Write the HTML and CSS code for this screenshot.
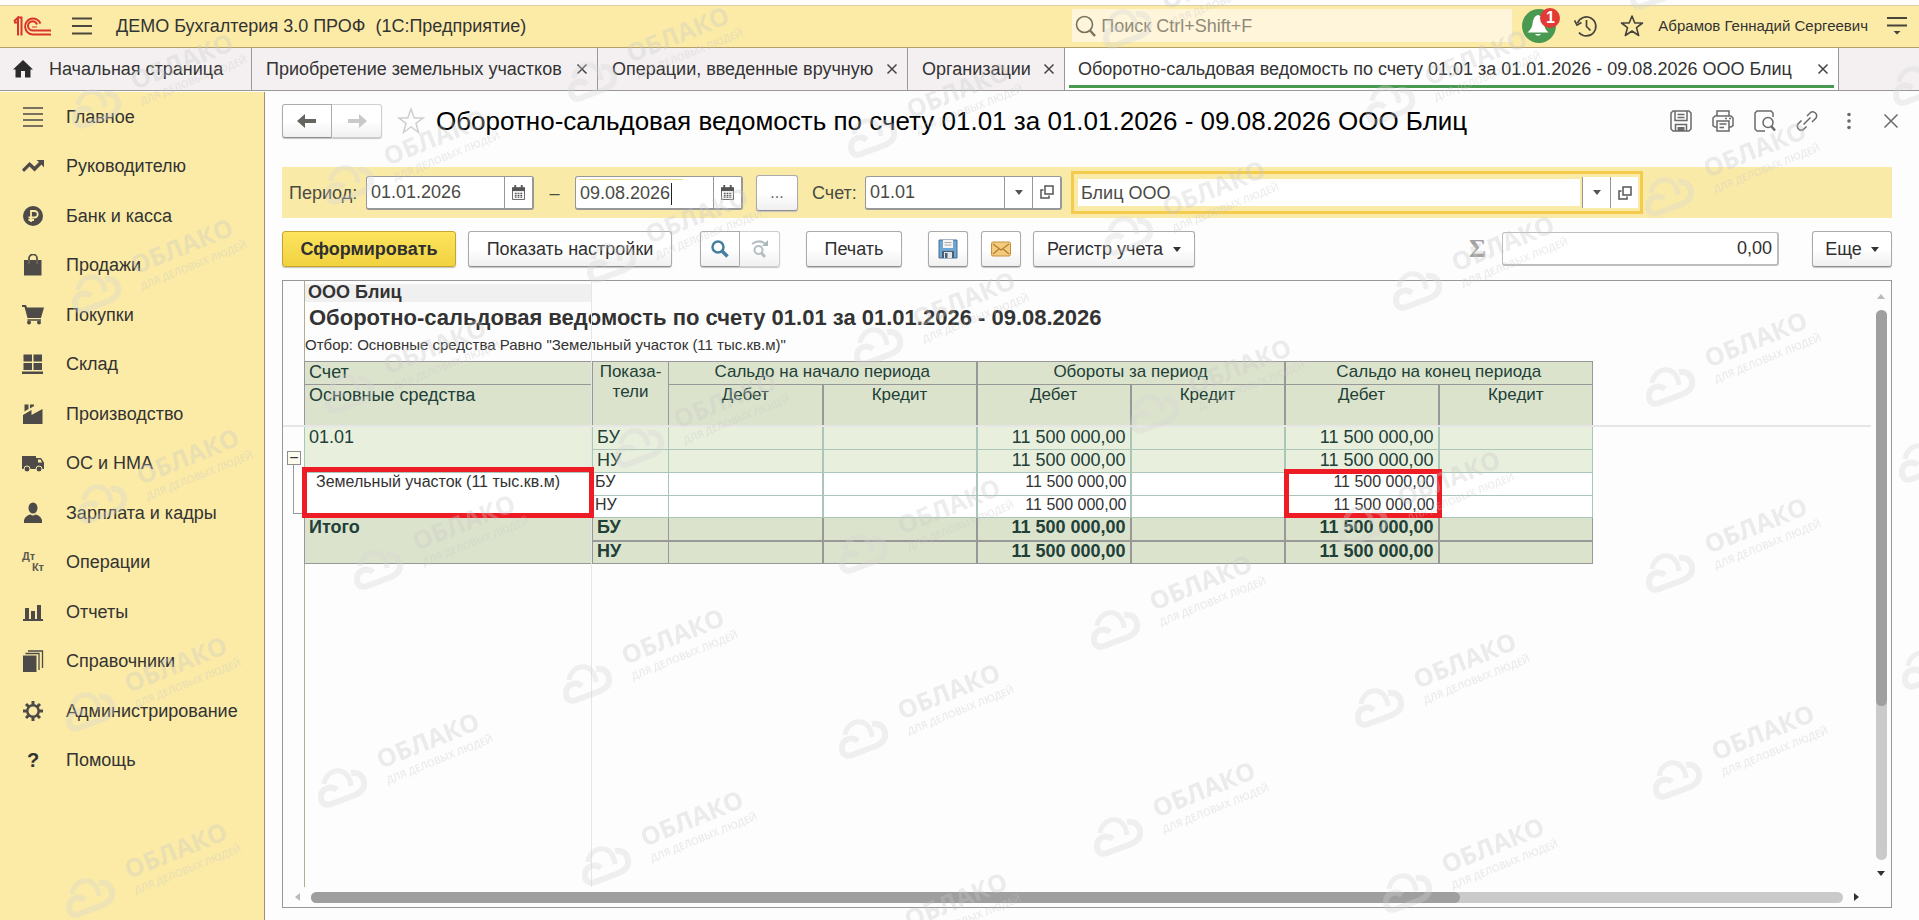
FILE: index.html
```html
<!DOCTYPE html>
<html lang="ru">
<head>
<meta charset="utf-8">
<title>ДЕМО Бухгалтерия 3.0 ПРОФ</title>
<meta name="viewport" content="width=device-width, initial-scale=1">
<link rel="stylesheet" href="styles.css">
</head>
<body>
<header class="topbar">
  <svg class="logo" width="38" height="20" viewBox="0 0 38 20" fill="none" stroke="#d9352c" aria-label="1С">
    <path d="M1 5.500L5 1.500V19.500M4.500 1.500H8.500V19.500M1 6.500H4" stroke-width="2"/>
    <path d="M27.500 7.500A8 8 0 1 0 20 18.500H38" stroke-width="2"/>
    <path d="M24 8.500A4.600 4.600 0 1 0 20 14.500H38" stroke-width="2"/>
    <path d="M19 11H24" stroke-width="1"/>
  </svg>
  <button class="plain burger" aria-label="Меню"><svg width="22" height="18" viewBox="0 0 22 18" stroke="#4b473c" stroke-width="1.800"><path d="M1 1.500H21M1 9H21M1 16.500H21"/></svg></button>
  <div class="app-title">ДЕМО Бухгалтерия 3.0 ПРОФ&nbsp; (1С:Предприятие)</div>
  <label class="search">
    <svg width="22" height="22" viewBox="0 0 22 22" fill="none" stroke="#77725e" stroke-width="1.600"><circle cx="9.500" cy="9.500" r="8"/><path d="M15 15.500L20 21" stroke-width="2.500"/></svg>
    <input type="search" placeholder="Поиск Ctrl+Shift+F" aria-label="Поиск">
  </label>
  <button class="plain bell" aria-label="Уведомления">
    <svg width="36" height="36" viewBox="0 0 36 36"><circle cx="18" cy="18" r="17" fill="#4a9950"/><path d="M17 7c-4 1-5 5-5.500 9-.4 3-2 6-5 8.500h21c-3-2.500-4-5.500-4.500-8.500C22 12 21 8 17 7z" fill="#fff"/><path d="M14 26a3.500 3.500 0 0 0 6 0z" fill="#fff"/></svg>
    <span class="badge">1</span>
  </button>
  <button class="plain history" aria-label="История"><svg width="24" height="24" viewBox="0 0 24 24" fill="none" stroke="#46443c" stroke-width="1.700"><path d="M3.500 9A9.500 9.500 0 1 1 5 18.500"/><path d="M0.500 6.500L3 11L7.500 8.500"/><path d="M12.500 6V12.500L16.500 16.500"/></svg></button>
  <button class="plain fav" aria-label="Избранное"><svg width="24" height="24" viewBox="0 0 24 24" fill="none" stroke="#46443c" stroke-width="1.600" stroke-linejoin="round"><path d="M12 2L14.800 9H22.500L16.500 13.700L18.700 21.500L12 17L5.300 21.500L7.500 13.700L1.500 9H9.200Z"/></svg></button>
  <div class="user">Абрамов Геннадий Сергеевич</div>
  <button class="plain service" aria-label="Сервис"><svg width="22" height="20" viewBox="0 0 22 20" stroke="#46443c" stroke-width="1.800"><path d="M1 2H21M1 9.500H21"/><path d="M7.500 15H14.500L11 18.500Z" fill="#46443c" stroke="none"/></svg></button>
</header>

<nav class="tabs" aria-label="Открытые окна">
  <a class="tab home" href="#"><svg width="20" height="18" viewBox="0 0 20 18" fill="#2b2b2b"><path d="M10 0L20 9.500H17.500V17.500H12V11H8V17.500H2.500V9.500H0Z"/></svg><span>Начальная страница</span></a>
  <a class="tab purchase" href="#"><span>Приобретение земельных участков</span><svg class="x" width="12" height="12" viewBox="0 0 12 12"><path d="M1.500 1.500L10.500 10.500M10.500 1.500L1.500 10.500"/></svg></a>
  <a class="tab manual" href="#"><span>Операции, введенные вручную</span><svg class="x" width="12" height="12" viewBox="0 0 12 12"><path d="M1.500 1.500L10.500 10.500M10.500 1.500L1.500 10.500"/></svg></a>
  <a class="tab orgs" href="#"><span>Организации</span><svg class="x" width="12" height="12" viewBox="0 0 12 12"><path d="M1.500 1.500L10.500 10.500M10.500 1.500L1.500 10.500"/></svg></a>
  <a class="tab active" href="#"><span>Оборотно-сальдовая ведомость по счету 01.01 за 01.01.2026 - 09.08.2026 ООО Блиц</span><svg class="x" width="12" height="12" viewBox="0 0 12 12"><path d="M1.500 1.500L10.500 10.500M10.500 1.500L1.500 10.500"/></svg></a>
</nav>

<div class="body">
  <aside class="sidebar">
    <nav class="sections">
      <a href="#"><svg viewBox="0 0 22 22" fill="none" stroke="#4d4a48" stroke-width="1.500"><path d="M1 2H21M1 8H21M1 14H21M1 20H21"/></svg>Главное</a>
      <a href="#"><svg viewBox="0 0 22 22"><path d="M0 14.500L7.500 7L12.500 11.500L17 7L14.500 5H22V12.500L19.500 9.500L12.500 16.500L7.500 11.500L2 17Z"/></svg>Руководителю</a>
      <a href="#"><svg viewBox="0 0 22 22"><circle cx="11" cy="11" r="10"/><path d="M9 17V6H12.500A3.200 3.200 0 0 1 12.500 12.500H6.500M6.500 15H12" fill="none" stroke="#fbeba6" stroke-width="1.800"/></svg>Банк и касса</a>
      <a href="#"><svg viewBox="0 0 22 22"><path d="M2 6H6V10H8V6H14V10H16V6H19.500V21.500H2Z"/><path d="M7 10V4A4 3.500 0 0 1 15 4V10" fill="none" stroke="#4d4a48" stroke-width="1.700"/></svg>Продажи</a>
      <a href="#"><svg viewBox="0 0 22 22"><path d="M0 1H4L5 3.500H22L19 14H5.500L2.500 3H0Z"/><path d="M5.500 16H19" stroke="#4d4a48" stroke-width="1.500"/><circle cx="7" cy="18.500" r="2"/><circle cx="17" cy="18.500" r="2"/></svg>Покупки</a>
      <a href="#"><svg viewBox="0 0 22 22"><path d="M1.500 1.500H10V8.500H1.500ZM11.500 1.500H20V8.500H11.500ZM1.500 10H10V17H1.500ZM11.500 10H20V17H11.500ZM0 18.500H21V21H0Z"/></svg>Склад</a>
      <a href="#"><svg viewBox="0 0 22 22"><path d="M1 21V12L9.500 7V12L20.500 6V21Z"/><path d="M2.500 1.500H6.500V6L2.500 8.500ZM8 1.500H12V3L8 5.500Z"/></svg>Производство</a>
      <a href="#"><svg viewBox="0 0 22 22"><path d="M0 4H14V6H19L22 10.500V17H0Z"/><path d="M16 7.500H18.500L20 10.500H16Z" fill="#fbeba6"/><circle cx="5" cy="17" r="3" stroke="#fbeba6"/><circle cx="17" cy="17" r="3" stroke="#fbeba6"/></svg>ОС и НМА</a>
      <a href="#"><svg viewBox="0 0 22 22"><ellipse cx="11" cy="6" rx="4.500" ry="5.500"/><path d="M2 21V18C3 14.500 6 13 8.500 12.500Q11 14.500 13.500 12.500C16 13 19 14.500 20 18V21Z"/></svg>Зарплата и кадры</a>
      <a href="#"><span class="dtkt"><b>Дт</b><b>Кт</b></span>Операции</a>
      <a href="#"><svg viewBox="0 0 22 22"><path d="M1 18H21V20H1ZM3 7H7V18H3ZM9 10H13V18H9ZM15 4H19V18H15Z"/></svg>Отчеты</a>
      <a href="#"><svg viewBox="0 0 22 22"><path d="M1 5.500H14.500V22H1Z"/><path d="M3.500 3.500H17V20M6 1H20.500V18" fill="none" stroke="#4d4a48" stroke-width="1.300"/></svg>Справочники</a>
      <a href="#"><svg viewBox="0 0 22 22"><circle cx="11" cy="11" r="5.700" fill="none" stroke="#4d4a48" stroke-width="2.500"/><path d="M11 1V5M11 17V21M1 11H5M17 11H21M4 4L6.800 6.800M15.200 15.200L18 18M4 18L6.800 15.200M15.200 6.800L18 4" stroke="#4d4a48" stroke-width="3"/></svg>Администрирование</a>
      <a href="#"><b class="qmark">?</b>Помощь</a>
    </nav>
  </aside>

  <main class="main">
    <div class="titlebar">
      <div class="nav-pair">
        <button class="btn" aria-label="Назад"><svg width="20" height="14" viewBox="0 0 20 14" fill="#66645f"><path d="M0 7L8 0V5H19V9H8V14Z"/></svg></button><button class="btn off" aria-label="Вперед"><svg width="20" height="14" viewBox="0 0 20 14" fill="#c9c9c9"><path d="M20 7L12 0V5H1V9H12V14Z"/></svg></button>
      </div>
      <button class="plain star" aria-label="В избранное"><svg width="28" height="28" viewBox="0 0 28 28" fill="none" stroke="#cfcfcf" stroke-width="1.500"><path d="M14 2L17.200 11H26L19 16.300L21.500 25.500L14 20L6.500 25.500L9 16.300L2 11H10.800Z"/></svg></button>
      <h1>Оборотно-сальдовая ведомость по счету 01.01 за 01.01.2026 - 09.08.2026 ООО Блиц</h1>
      <div class="win-tools">
        <button class="plain" aria-label="Сохранить"><svg width="22" height="22" viewBox="0 0 22 22"><path d="M3 1H19L21 3V19L19 21H3L1 19V3Z"/><path d="M5 1V10.500H17V1M7.500 4.500H14.500M7.500 7.500H14.500M5.500 21V14.500H16.500V21"/><path d="M7.500 17H14.500V21H7.500Z" fill="#6a6a6a" stroke="none"/></svg></button>
        <button class="plain" aria-label="Печать"><svg width="22" height="22" viewBox="0 0 22 22"><path d="M5 6V1H17V6M5 17H3L1 15.500V8L3 6H19L21 8V15.500L19 17H17"/><path d="M5 11H17V21H5ZM7.500 14H14.500M7.500 17.500H12M13 8.500H15M17 8.500H19"/></svg></button>
        <button class="plain" aria-label="Просмотр"><svg width="22" height="22" viewBox="0 0 22 22"><path d="M11 21H3L1 19V3L3 1H17L19 3V7"/><circle cx="14" cy="12.500" r="5"/><path d="M17.500 16.500L21 20.500" stroke-width="2.500"/></svg></button>
        <button class="plain" aria-label="Ссылка"><svg width="22" height="22" viewBox="0 0 22 22"><path d="M11 6L14.500 2.500A4 4 0 0 1 20 8L16 12M10.500 16.500L7.500 19.500A4 4 0 0 1 2 14L5.500 10.500M7.500 14.500L14.500 7.500"/></svg></button>
        <button class="plain" aria-label="Еще"><svg width="22" height="22" viewBox="0 0 22 22"><g fill="#6a6a6a" stroke="none"><circle cx="11" cy="4.500" r="1.800"/><circle cx="11" cy="11" r="1.800"/><circle cx="11" cy="17.500" r="1.800"/></g></svg></button>
        <button class="plain" aria-label="Закрыть"><svg width="22" height="22" viewBox="0 0 22 22"><path d="M4.500 4.500L17.500 17.500M17.500 4.500L4.500 17.500"/></svg></button>
      </div>
    </div>

    <form class="filter">
      <label class="period" for="d1">Период:</label>
      <div class="field date"><input id="d1" value="01.01.2026"><button type="button" aria-label="Календарь"><svg width="13" height="15" viewBox="0 0 14 16"><use href="#cal"/></svg></button></div>
      <span class="dash">–</span>
      <div class="field date focus"><input id="d2" value="09.08.2026" aria-label="Конец периода"><i class="caret"></i><button type="button" aria-label="Календарь"><svg width="13" height="15" viewBox="0 0 14 16"><use href="#cal"/></svg></button></div>
      <button type="button" class="btn dots">...</button>
      <label class="acc" for="acc">Счет:</label>
      <div class="field account"><input id="acc" value="01.01"><button type="button" aria-label="Выбрать"><i class="caretdown"></i></button><button type="button" aria-label="Открыть"><svg width="14" height="14" viewBox="0 0 14 14"><use href="#open"/></svg></button></div>
      <div class="org"><input value="Блиц ООО" aria-label="Организация"><button type="button" aria-label="Выбрать"><i class="caretdown"></i></button><button type="button" aria-label="Открыть"><svg width="14" height="14" viewBox="0 0 14 14"><use href="#open"/></svg></button></div>
    </form>

    <div class="toolbar">
      <button class="btn primary">Сформировать</button>
      <button class="btn settings">Показать настройки</button>
      <div class="find-pair">
        <button class="btn" aria-label="Найти"><svg width="20" height="20" viewBox="0 0 20 20" fill="none" stroke="#457f9f"><circle cx="8" cy="8" r="5.500" stroke-width="2.500"/><path d="M12 12L17.500 17.500" stroke-width="3.500"/></svg></button><button class="btn off" aria-label="Найти далее"><svg width="20" height="22" viewBox="0 0 20 22" fill="none" stroke="#b5bfc2"><circle cx="8.500" cy="12" r="4" stroke-width="2"/><path d="M11.500 15L15 19" stroke-width="3"/><path d="M2 6Q9 1 15 5.500" stroke-width="2"/><path d="M18 2V8H12Z" fill="#a9b7bc" stroke="none"/></svg></button>
      </div>
      <button class="btn print">Печать</button>
      <button class="btn icon save" aria-label="Сохранить"><svg width="20" height="20" viewBox="0 0 20 20"><path d="M1 1H19V19H1Z" fill="#6da5d3" stroke="#4a6f92"/><path d="M5 1H15V9H5Z" fill="#f4f4f4"/><path d="M6.500 3.500H13.500M6.500 6H13.500" stroke="#aaa"/><path d="M4 12H16V19H4Z" fill="#4c5f70"/><path d="M6 13H14V19H6Z" fill="#dfe6ea"/><path d="M7 14H9.500V19H7Z" fill="#4c5f70"/></svg></button>
      <button class="btn icon" aria-label="Отправить"><svg width="20" height="16" viewBox="0 0 20 16"><rect x=".5" y="1" width="19" height="14" rx="1.500" fill="#f2cb7c" stroke="#c78f3c"/><path d="M2 3L10 9L18 3M2 13L8 8M18 13L12 8" fill="none" stroke="#b57c33" stroke-width="1.200"/></svg></button>
      <button class="btn register">Регистр учета<i class="caretdown"></i></button>
      <span class="sigma">Σ</span>
      <input class="sum" value="0,00" aria-label="Сумма">
      <button class="btn more">Еще<i class="caretdown"></i></button>
    </div>

    <section class="panel">
      <div class="view">
        <div class="gutter"><button class="toggle" aria-label="Свернуть">−</button><i class="branch"></i></div>
        <div class="sheet">
          <div class="org-name">ООО Блиц</div>
          <h2>Оборотно-сальдовая ведомость по счету 01.01 за 01.01.2026 - 09.08.2026</h2>
          <p class="cond">Отбор: Основные средства Равно "Земельный участок (11 тыс.кв.м)"</p>
          <table class="report">
            <colgroup><col class="c-name"><col class="c-ind"><col span="6" class="c-num"></colgroup>
            <thead>
              <tr class="h1"><th class="name">Счет</th><th rowspan="2">Показа-<br>тели</th><th colspan="2">Сальдо на начало периода</th><th class="rule" colspan="2">Обороты за период</th><th class="rule" colspan="2">Сальдо на конец периода</th></tr>
              <tr class="h2"><th class="name">Основные средства</th><th>Дебет</th><th>Кредит</th><th>Дебет</th><th>Кредит</th><th>Дебет</th><th>Кредит</th></tr>
            </thead>
            <tbody class="acct">
              <tr><td class="name" rowspan="2">01.01</td><td>БУ</td><td></td><td></td><td class="n">11 500 000,00</td><td></td><td class="n">11 500 000,00</td><td></td></tr>
              <tr><td>НУ</td><td></td><td></td><td class="n">11 500 000,00</td><td></td><td class="n">11 500 000,00</td><td></td></tr>
            </tbody>
            <tbody class="item">
              <tr><td class="name mark" rowspan="2">Земельный участок (11 тыс.кв.м)</td><td>БУ</td><td></td><td></td><td class="n">11 500 000,00</td><td></td><td class="n mark two">11 500 000,00</td><td></td></tr>
              <tr><td>НУ</td><td></td><td></td><td class="n">11 500 000,00</td><td></td><td class="n">11 500 000,00</td><td></td></tr>
            </tbody>
            <tbody class="total">
              <tr><td class="name" rowspan="2">Итого</td><td>БУ</td><td></td><td></td><td class="n">11 500 000,00</td><td></td><td class="n">11 500 000,00</td><td></td></tr>
              <tr><td>НУ</td><td></td><td></td><td class="n">11 500 000,00</td><td></td><td class="n">11 500 000,00</td><td></td></tr>
            </tbody>
          </table>
        </div>
        <i class="freeze-h"></i><i class="freeze-v"></i>
      </div>
      <div class="vbar"><i class="arr up"></i><div class="track"><div class="thumb"></div></div><i class="arr down"></i></div>
      <div class="hbar"><i class="arr left"></i><div class="track"><div class="thumb"></div></div><i class="arr right"></i></div>
    </section>
  </main>
</div>

<svg class="watermarks" aria-hidden="true">
  <defs>
    <symbol id="cal" viewBox="0 0 14 16"><path d="M.5 3H13.500V15.500H.5Z" fill="#fff" stroke="#5a5a5a"/><path d="M0 2.500H14V6.500H0Z" fill="#555"/><path d="M3.500 0V4M10.500 0V4" stroke="#555" stroke-width="2"/><path d="M3 9H5M6 9H8M9 9H11M3 11H5M6 11H8M9 11H11M3 13H5M6 13H8M9 13H11" stroke="#555" stroke-width="1.300"/></symbol>
    <symbol id="open" viewBox="0 0 14 14"><path d="M5 1H13V9H5ZM3.500 5H1V13H9V10.500" fill="none" stroke="#555" stroke-width="1.500"/></symbol>
    <g id="wm"><g fill="none" stroke="#d4d4d4" stroke-width="6" opacity=".32"><path d="M19-18C13-23 3-20 3-11C3-4 8-2 13-4L37-13C44-16 47-21 46-27C44-34 39-36 33-35"/><path d="M6-24C8-40 31-44 33-22" stroke-width="5"/></g><g fill="#c8c8c8" opacity=".33"><text class="wm-big" transform="translate(63 -39) rotate(-22)">ОБЛАКО</text><text class="wm-small" transform="translate(70 -24) rotate(-22)">ДЛЯ ДЕЛОВЫХ ЛЮДЕЙ</text></g></g>
  </defs>
  <use href="#wm" x="72" y="129"/><use href="#wm" x="72" y="314"/><use href="#wm" x="78" y="524"/><use href="#wm" x="66" y="732"/><use href="#wm" x="66" y="918"/>
  <use href="#wm" x="325" y="205"/><use href="#wm" x="325" y="414"/><use href="#wm" x="354" y="590"/><use href="#wm" x="318" y="808"/>
  <use href="#wm" x="568" y="102"/><use href="#wm" x="587" y="283"/><use href="#wm" x="615" y="468"/><use href="#wm" x="563" y="704"/><use href="#wm" x="582" y="886"/>
  <use href="#wm" x="848" y="158"/><use href="#wm" x="854" y="367"/><use href="#wm" x="839" y="574"/><use href="#wm" x="839" y="759"/><use href="#wm" x="846" y="968"/>
  <use href="#wm" x="1103" y="49"/><use href="#wm" x="1104" y="256"/><use href="#wm" x="1130" y="434"/><use href="#wm" x="1091" y="650"/><use href="#wm" x="1094" y="857"/>
  <use href="#wm" x="1366" y="125"/><use href="#wm" x="1393" y="311"/><use href="#wm" x="1339" y="546"/><use href="#wm" x="1355" y="728"/><use href="#wm" x="1383" y="913"/>
  <use href="#wm" x="1630" y="10"/><use href="#wm" x="1645" y="217"/><use href="#wm" x="1646" y="407"/><use href="#wm" x="1646" y="593"/><use href="#wm" x="1653" y="800"/>
  <use href="#wm" x="1893" y="106"/><use href="#wm" x="1899" y="483"/><use href="#wm" x="1902" y="690"/>
</svg>
</body>
</html>
```
FILE: styles.css
```css
* { box-sizing: border-box; }
html, body { height: 100%; }
body {
  margin: 0;
  display: flex;
  flex-direction: column;
  overflow: hidden;
  background: #fdfdfd;
  color: #333;
  font: 18px/22px "Liberation Sans", Arial, sans-serif;
}
button, input { font: inherit; color: inherit; margin: 0; }
input { outline: none; border: 0; background: transparent; min-width: 0; }
a { color: inherit; text-decoration: none; }
svg { flex: none; display: block; }
.plain { border: 0; background: none; padding: 0; display: flex; align-items: center; justify-content: center; }

/* top bar */
.topbar {
  flex: none;
  display: flex;
  align-items: center;
  height: 43px;
  margin-top: 5px;
  padding: 0 11px 2px 13px;
  background: #fbeba6;
  border-top: 1px solid #d9cfa0;
  border-bottom: 1px solid #b3a068;
}
.burger { margin-left: 20px; }
.app-title { margin-left: 23px; white-space: nowrap; }
.search {
  display: flex;
  align-items: center;
  width: 440px;
  height: 33px;
  margin-left: auto;
  padding-left: 3px;
  background: #fef5da;
}
.search input { flex: 1; padding: 0 0 0 4px; }
.search input::placeholder { color: #8f8a78; opacity: 1; }
.bell { position: relative; margin-left: 9px; }
.badge {
  position: absolute;
  top: 0;
  right: -3px;
  width: 20px;
  height: 20px;
  border-radius: 50%;
  background: #e23a34;
  color: #fff;
  font: bold 16px/20px "Liberation Sans", Arial, sans-serif;
}
.history { margin-left: 17px; }
.fav { margin-left: 22px; }
.user { margin-left: 14px; font-size: 15px; white-space: nowrap; }
.service { margin-left: 18px; }

/* window tabs */
.tabs {
  flex: none;
  display: flex;
  height: 43px;
  background: #f4f0f1;
  border-bottom: 1px solid #989898;
}
.tab {
  position: relative;
  display: flex;
  align-items: center;
  justify-content: space-between;
  gap: 8px;
  padding: 0 9px 1px 14px;
  border-right: 1px solid #989898;
  white-space: nowrap;
}
.tab.home { gap: 16px; min-width: 252px; padding-left: 13px; justify-content: flex-start; }
.tab.purchase { min-width: 346px; }
.tab.manual { min-width: 310px; }
.tab.orgs { min-width: 157px; }
.tab.active { min-width: 774px; background: #fff; padding-left: 13px; }
.tab.active::after {
  content: "";
  position: absolute;
  inset: auto 4px 2px 4px;
  height: 3px;
  background: #4a9950;
}
.x { stroke: #444; stroke-width: 1.5px; fill: none; }

/* body */
.body { flex: 1; display: flex; min-height: 0; padding-top: 1px; }
.sidebar { flex: none; width: 265px; background: #fbeba6; border-right: 1px solid #a39265; }
.sections { display: grid; grid-auto-rows: 1fr; height: 693px; }
.sections a { display: grid; grid-template-columns: 22px 1fr; column-gap: 22px; align-items: center; padding-left: 22px; }
.sections svg { width: 22px; height: 22px; fill: #4d4a48; }
.dtkt { display: flex; flex-direction: column; color: #5d594f; font-size: 11px; line-height: 11px; }
.dtkt b + b { align-self: flex-end; }
.qmark { text-align: center; font-size: 20px; color: #333; }

.main { flex: 1; min-width: 0; display: flex; flex-direction: column; padding: 12px 27px 12px 17px; }
.titlebar { display: flex; align-items: center; height: 34px; }
.btn {
  display: flex;
  align-items: center;
  justify-content: center;
  padding: 0;
  height: 36px;
  border: 1px solid #ababab;
  border-bottom-color: #8f8f8f;
  border-radius: 3px;
  background: linear-gradient(#fff 50%, #f0f0f0);
  box-shadow: 0 1px 1px #c4c4c4;
  white-space: nowrap;
}
.nav-pair, .find-pair { display: flex; }
.nav-pair .btn { width: 50px; height: 34px; }
.nav-pair .btn:first-child, .find-pair .btn:first-child { border-radius: 3px 0 0 3px; }
.btn.off { border-left: 0; border-radius: 0 3px 3px 0; border-color: #cfcfcf; }
.star { margin-left: 15px; }
h1 { margin: 0 0 0 11px; font-size: 26px; line-height: 30px; font-weight: normal; color: #000; white-space: nowrap; }
.win-tools { display: flex; gap: 20px; margin-left: auto; margin-right: -10px; }
.win-tools svg { fill: none; stroke: #6a6a6a; stroke-width: 1.5px; }

.filter {
  display: flex;
  align-items: center;
  height: 51px;
  margin-top: 29px;
  padding-left: 7px;
  background: #faeaa8;
  color: #4a4a44;
}
.filter label { white-space: nowrap; }
.field { display: flex; height: 34px; border: 1px solid #989898; border-width: 1px 2px 2px 1px; border-radius: 3px; background: #fff; }
.field input { flex: 1; padding: 0 4px; }
.field button, .org button {
  display: flex;
  align-items: center;
  justify-content: center;
  width: 28px;
  padding: 0;
  border: 0;
  border-left: 1px solid #989898;
  background: #fff;
}
.period { width: 77px; }
.date { width: 168px; position: relative; }
.focus input { padding-top: 2px; }
.focus::before { content: ""; position: absolute; top: 2px; left: 3px; width: 104px; height: 1px; background: #f0dc8c; }
.caret { position: absolute; left: 95px; top: 6px; width: 1px; height: 22px; background: #222; }
.dash { width: 41px; text-align: center; }
.dots { width: 42px; margin-left: 13px; color: #666; font-size: 16px; }
.acc { width: 53px; margin-left: 14px; }
.account { width: 197px; }
.org {
  display: flex;
  width: 572px;
  height: 43px;
  margin-left: 9px;
  padding: 3px 2px;
  border: 3px solid #f4cb4c;
}
.org input { flex: 1; margin: 2px 2px 2px 2px; padding: 0 3px; background: #fff; }
.caretdown { border: 4px solid transparent; border-top: 5px solid #333; border-bottom: 0; }
.filter .caretdown { border-top-color: #555; }

.toolbar { display: flex; align-items: center; margin-top: 13px; color: #2f2f2f; }
.primary {
  width: 174px;
  border-color: #c8a52b;
  background: linear-gradient(#fde45f, #f1d23f);
  font-weight: bold;
}
.settings { width: 204px; margin-left: 12px; }
.find-pair { margin-left: 28px; }
.find-pair .btn { width: 40px; }
.print { width: 96px; margin-left: 26px; }
.icon { width: 40px; margin-left: 13px; }
.icon.save { margin-left: 26px; }
.register { width: 162px; margin-left: 12px; gap: 10px; }
.more { width: 80px; margin-left: 33px; gap: 9px; }
.sigma { margin-left: auto; margin-right: 16px; font: bold 26px/30px "Liberation Serif", serif; color: #a2a2a2; }
.sum { width: 277px; height: 34px; padding: 0 5px; border: 1px solid #bdbdbd; border-width: 1px 2px 2px 1px; border-radius: 3px; background: #fff; text-align: right; }

/* report panel */
.panel {
  flex: 1;
  min-height: 0;
  display: grid;
  grid-template: 1fr 20px / 1fr 20px;
  margin-top: 13px;
  border: 1px solid #989898;
  background: #fdfdfd;
}
.view { position: relative; display: flex; overflow: hidden; }
.gutter { flex: none; width: 22px; padding: 170px 0 0 4px; border-right: 1px solid #b5ad92; }
.toggle {
  display: block;
  width: 14px;
  height: 14px;
  padding: 0;
  border: 1px solid #8f8f8f;
  background: #fbfbee;
  font-size: 16px;
  line-height: 10px;
}
.branch { display: block; width: 10px; height: 49px; margin-left: 6px; border: solid #999; border-width: 0 0 1px 1px; }
.sheet { flex: 1; min-width: 0; padding-top: 3px; }
.org-name { width: 287px; height: 18px; padding-left: 3px; background: #f0f0f0; font-weight: bold; line-height: 16px; }
h2 { margin: 0; padding-left: 4px; height: 34px; font-size: 22px; line-height: 32px; }
.cond { margin: 0; height: 25px; font-size: 15px; line-height: 17px; }
h2, .cond { white-space: nowrap; }
.report { table-layout: fixed; width: 1288px; border-collapse: collapse; margin-left: -1px; color: #204038; }
.c-name { width: 288px; }
.c-ind { width: 76px; }
.c-num { width: 154px; }
.report th { font-size: 17px; font-weight: normal; background: #dce3cc; }
.report th, .report td { padding: 0 4px; line-height: 20px; vertical-align: top; border: 1px solid #989898; }
.report .h2 th:nth-last-child(-n+5), .report td:nth-last-child(-n+5), .report .rule { border-left-width: 2px; }
.report .name { text-align: left; }
.report th.name { font-size: 18px; }
.h1 { height: 23px; }
.h2 { height: 42px; }
.acct tr, .total tr, .item tr { height: 23px; }
.item tr + tr { height: 22px; }
.report .acct td { background: #e9efdd; border-color: #aac6b8; }
.report .item td { background: #fff; border-color: #aac6b8; color: #333; font-size: 16px; line-height: 18px; padding: 0 3px 0 2px; }
.report .total td { background: #dce3cc; font-weight: bold; line-height: 19px; }
.report .total tr + tr td { border-top-width: 2px; }
.report .n { text-align: right; }
.report .item .name { padding-left: 11px; }
.mark { position: relative; }
.mark::after { content: ""; position: absolute; z-index: 1; inset: -6px -2px -1px -3px; border: 5px solid #ee1c25; }
.mark.two::after { inset: -4px -4px -23px -2px; }
.freeze-h, .freeze-v { position: absolute; background: #e6e6e6; }
.freeze-h { top: 144px; left: 0; right: 0; height: 2px; }
.freeze-v { left: 308px; top: 0; bottom: 0; width: 1px; }

.vbar { display: flex; flex-direction: column; align-items: center; justify-content: space-between; padding: 13px 0 11px; }
.vbar .track { flex: 1; width: 11px; margin: 11px 0; border-radius: 6px; background: #cbcacb; }
.vbar .thumb { height: 72%; border-radius: 6px; background: #a09fa0; }
.hbar { display: flex; align-items: center; padding: 0 12px 0 12px; }
.hbar .track { flex: 1; height: 11px; margin: 0 11px; border-radius: 6px; background: #cbcacb; }
.hbar .thumb { width: 75%; height: 11px; border-radius: 6px; background: #a09fa0; }
.arr { border: 4px solid transparent; }
.up { border-bottom: 5px solid #bbb; border-top: 0; }
.down { border-top: 5px solid #333; border-bottom: 0; }
.left { border-right: 5px solid #bbb; border-left: 0; }
.right { border-left: 5px solid #333; border-right: 0; }

.watermarks { position: fixed; inset: 0; width: 100%; height: 100%; pointer-events: none; z-index: 5; }
.wm-big { font: bold 25px "Open Sans", sans-serif; }
.wm-small { font: 600 10px "Open Sans", sans-serif; }
```
